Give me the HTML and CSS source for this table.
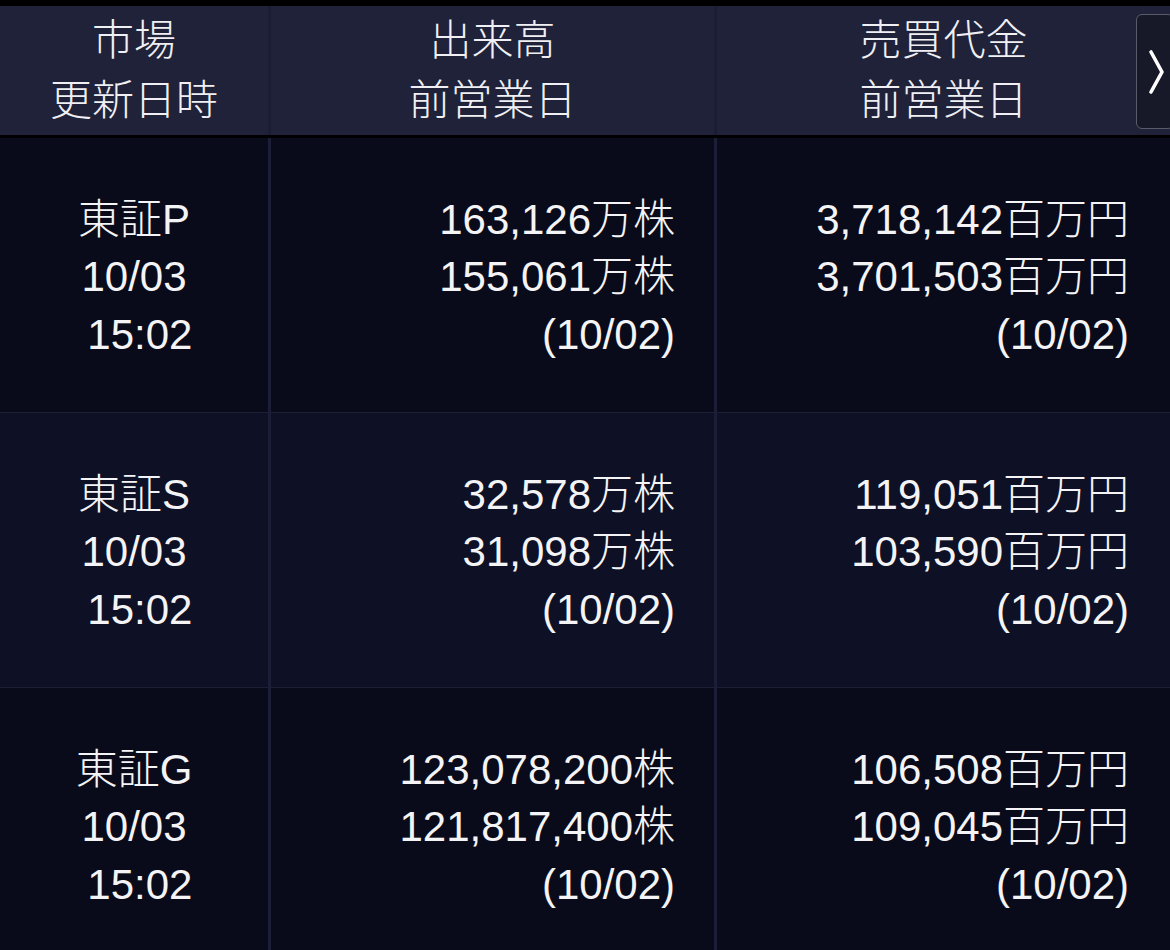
FILE: index.html
```html
<!DOCTYPE html>
<html lang="ja">
<head>
<meta charset="utf-8">
<link rel="stylesheet" href="styles.css">
</head>
<body>
<div class="screen">
  <div class="table">
    <div class="head-row">
      <div class="hcell c1">市場<br>更新日時</div>
      <div class="hcell c2">出来高<br>前営業日</div>
      <div class="hcell c3">売買代金<br>前営業日</div>
      <button class="next" aria-label="next">
        <svg width="20" height="46" viewBox="0 0 20 46"><polyline points="4,3 15,23 4,43" fill="none" stroke="#fff" stroke-width="3.6" stroke-linecap="round" stroke-linejoin="round"/></svg>
      </button>
    </div>
    <div class="row">
      <div class="cell c1 center">東証P<br>10/03<br>&nbsp;15:02</div>
      <div class="cell c2 right">163,126万株<br>155,061万株<br>(10/02)</div>
      <div class="cell c3 right">3,718,142百万円<br>3,701,503百万円<br>(10/02)</div>
    </div>
    <div class="row alt">
      <div class="cell c1 center">東証S<br>10/03<br>&nbsp;15:02</div>
      <div class="cell c2 right">32,578万株<br>31,098万株<br>(10/02)</div>
      <div class="cell c3 right">119,051百万円<br>103,590百万円<br>(10/02)</div>
    </div>
    <div class="row">
      <div class="cell c1 center">東証G<br>10/03<br>&nbsp;15:02</div>
      <div class="cell c2 right">123,078,200株<br>121,817,400株<br>(10/02)</div>
      <div class="cell c3 right">106,508百万円<br>109,045百万円<br>(10/02)</div>
    </div>
  </div>
</div>
</body>
</html>
```

FILE: styles.css
```css
html, body {
  margin: 0;
  padding: 0;
  background: #000;
}
.screen {
  width: 1170px;
  height: 950px;
  overflow: hidden;
  padding-top: 6px;
  box-sizing: border-box;
  background: #000;
  font-family: "Liberation Sans", "Noto Sans CJK JP", sans-serif;
  font-weight: 300;
  font-size: 42px;
  color: #f4f4f6;
}
.table {
  display: flex;
  flex-direction: column;
}
.head-row {
  position: relative;
  display: grid;
  grid-template-columns: 271px 446px 1fr;
  height: 129px;
  background: #20223a;
  margin-bottom: 3px;
}
.hcell {
  display: flex;
  flex-direction: column;
  justify-content: center;
  text-align: center;
  line-height: 60px;
  color: #f0f0f4;
}
.hcell.c1, .hcell.c2 {
  border-right: 3px solid #1b1d34;
}
.next {
  position: absolute;
  right: -4px;
  top: 8px;
  width: 38px;
  height: 115px;
  border: 1.5px solid #5a5c6c;
  border-radius: 6px;
  background: #171929;
  padding: 0 0 0 10px;
  display: flex;
  align-items: center;
  justify-content: flex-start;
  box-sizing: border-box;
}
.row {
  display: grid;
  grid-template-columns: 271px 446px 1fr;
  height: 274px;
  background: #0a0b1a;
}
.row + .row {
  border-top: 1px solid #1c1e36;
}
.row.alt {
  background: #0e1025;
}
.cell {
  display: flex;
  flex-direction: column;
  justify-content: center;
  line-height: 57.5px;
  white-space: nowrap;
  padding-top: 4px;
}
.cell.c1, .cell.c2 {
  border-right: 3px solid #1c1e37;
}
.center {
  text-align: center;
}
.right {
  text-align: right;
  align-items: flex-end;
}
.cell.c2 {
  padding-right: 39px;
}
.cell.c3 {
  padding-right: 41px;
}
```
